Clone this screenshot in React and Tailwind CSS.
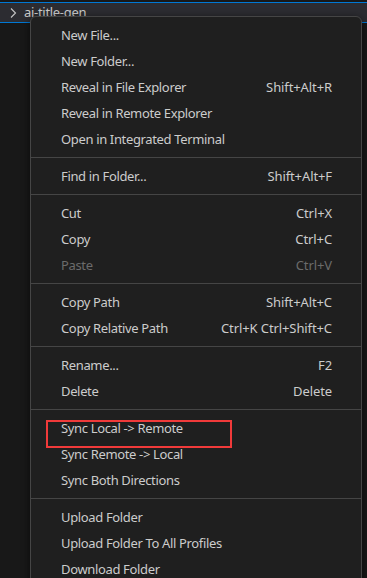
import React from 'react';

const items = [
  [{ label: 'New File...' }, { label: 'New Folder...' }, { label: 'Reveal in File Explorer', key: 'Shift+Alt+R' }, { label: 'Reveal in Remote Explorer' }, { label: 'Open in Integrated Terminal' }],
  [{ label: 'Find in Folder...', key: 'Shift+Alt+F' }],
  [{ label: 'Cut', key: 'Ctrl+X' }, { label: 'Copy', key: 'Ctrl+C' }, { label: 'Paste', key: 'Ctrl+V', disabled: true }],
  [{ label: 'Copy Path', key: 'Shift+Alt+C' }, { label: 'Copy Relative Path', key: 'Ctrl+K Ctrl+Shift+C' }],
  [{ label: 'Rename...', key: 'F2' }, { label: 'Delete', key: 'Delete' }],
  [{ label: 'Sync Local -> Remote' }, { label: 'Sync Remote -> Local' }, { label: 'Sync Both Directions' }],
  [{ label: 'Upload Folder' }, { label: 'Upload Folder To All Profiles' }, { label: 'Download Folder' }],
];

const MenuItem = ({ label, shortcut, disabled }) => (
  <div className={`h-[26px] pt-[2px] flex items-center justify-between pl-[30px] pr-[29px] ${disabled ? 'text-[#6b6b6b]' : 'text-[#cccccc]'}`}>
    <span className="tracking-[-0.35px]">{label}</span>
    {shortcut && <span className="tracking-[-0.1px]">{shortcut}</span>}
  </div>
);

export default function App() {
  return (
    <div
      className="relative w-[367px] h-[578px] overflow-hidden bg-[#181818] text-[13px]"
      style={{ fontFamily: '"Noto Sans", "Open Sans", sans-serif' }}
    >
      {/* focused explorer row */}
      <div className="mt-[2px] h-[21px] border-y border-[#0078d4] bg-[#2c2c31] flex items-center text-[#cccccc]">
        <svg className="ml-[8px] w-[10px] h-[12px]" viewBox="0 0 10 12" fill="none" stroke="#c5c5c5" strokeWidth="1.1">
          <path d="M3 1.5 L7.5 6 L3 10.5" />
        </svg>
        <span className="ml-[6px] tracking-[-0.3px]">ai-title-gen</span>
      </div>

      {/* context menu */}
      <div className="absolute left-[30px] top-[16px] w-[332px] h-[600px] bg-[#1f1f1f] border border-[#454545] rounded-[6px] pt-[5px] shadow-[0_2px_8px_rgba(0,0,0,0.6)]">
        {items.map((group, gi) => (
          <div key={gi}>
            {gi > 0 && <div className="my-[5px] h-px bg-[#454545]" />}
            {group.map((it) => (
              <MenuItem key={it.label} label={it.label} shortcut={it.key} disabled={it.disabled} />
            ))}
          </div>
        ))}
      </div>

      {/* highlight box */}
      <div className="absolute left-[46px] top-[420px] w-[186px] h-[28px] border-2 border-[#f03a3a]" />
    </div>
  );
}
